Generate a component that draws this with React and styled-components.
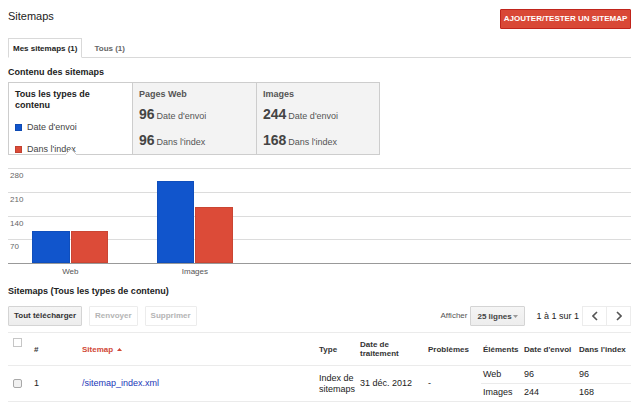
import React from "react";
import styled, { createGlobalStyle } from "styled-components";

const GlobalStyle = createGlobalStyle`
  *, *::before, *::after {
    box-sizing: border-box;
  }
  body {
    margin: 0;
    background: #fff;
    color: #222;
    font: 9px/12px "Liberation Sans", Arial, sans-serif;
  }
  button, select, input {
    font-family: inherit;
    margin: 0;
  }
`;

const Page = styled.main`
  padding: 9px 9px 0 8px;
`;

const Header = styled.header`
  display: flex;
  justify-content: space-between;
  align-items: flex-start;
`;

const Title = styled.h1`
  margin: 0;
  font-size: 11px;
  font-weight: 400;
  line-height: 14px;
`;

const Button = styled.button`
  height: 20px;
  padding: 0 5px;
  border: 1px solid #d4d4d4;
  border-radius: 1px;
  background: linear-gradient(#f5f5f5, #ededed);
  color: #333;
  font-size: 8px;
  font-weight: 700;
  line-height: 18px;
  white-space: nowrap;

  &:disabled {
    border-color: #ececec;
    background: #fff;
    color: #b4b4b4;
  }
`;

const PrimaryButton = styled(Button)`
  padding: 0 2px;
  min-width: 131px;
  border-color: #c0241b;
  background: #d94836;
  color: #fff;
`;

const Tabs = styled.nav`
  display: flex;
  margin-top: 9px;
  border-bottom: 1px solid #d9d9d9;
`;

const Tab = styled.a`
  height: 20px;
  margin-bottom: -1px;
  padding: 0 ${props => (props.$active ? 4 : 11)}px;
  border: 1px solid ${props => (props.$active ? "#d9d9d9" : "transparent")};
  border-bottom-color: ${props => (props.$active ? "#fff" : "transparent")};
  color: ${props => (props.$active ? "#222" : "#666")};
  font-size: 8px;
  font-weight: 700;
  line-height: 19px;
  text-decoration: none;
`;

const SectionTitle = styled.h2`
  margin: ${props => props.$top}px 0 0;
  font-size: 9px;
  font-weight: 700;
  line-height: 12px;
`;

const Cards = styled.div`
  display: grid;
  grid-template-columns: repeat(3, minmax(0, 124px));
  margin-top: 4px;
`;

const Card = styled.section`
  position: relative;
  height: 73px;
  margin-right: -1px;
  padding: 6px 6px 0;
  border: 1px solid #cdcdcd;
  background: ${props => (props.$active ? "#fff" : "#f3f3f3")};
  color: ${props => (props.$active ? "#222" : "#555")};

  &:last-child {
    margin-right: 0;
  }
`;

const CardTitle = styled.h3`
  margin: 0;
  font-size: 9px;
  font-weight: 700;
  line-height: 11px;
`;

const Legend = styled.div`
  display: flex;
  align-items: center;
  gap: 5px;
  margin-top: 10px;
  color: #444;
`;

const Swatch = styled.span`
  width: 7px;
  height: 7px;
  border: 1px solid rgba(0, 0, 0, 0.12);
  background: ${props => props.$color};
`;

const Stat = styled.div`
  display: flex;
  align-items: baseline;
  gap: 2px;
  margin-top: 4px;
  line-height: 20px;
`;

const Count = styled.strong`
  font-size: 14px;
  color: #444;
`;

const Notch = styled.svg`
  position: absolute;
  bottom: -1px;
  left: 50%;
  width: 12px;
  height: 7px;
  margin-left: -6px;
`;

const Plot = styled.div`
  display: grid;
  height: 96px;
  margin-top: 13px;
  border-bottom: 1px solid #999;
`;

const Scale = styled.div`
  grid-area: 1 / 1;
  display: flex;
  flex-direction: column;
`;

const Tick = styled.div`
  flex: 1;
  padding: 0 2px;
  border-top: 1px solid #dcdcdc;
  color: #666;
  font-size: 8px;
  line-height: 13px;
`;

const Columns = styled.div`
  grid-area: 1 / 1;
  display: grid;
  grid-template-columns: repeat(5, 1fr);
`;

const Bars = styled(Columns)`
  padding-top: 1px;
`;

const BarPair = styled.div`
  display: flex;
  justify-content: center;
  align-items: flex-end;
  gap: 1px;
`;

const Bar = styled.div`
  width: 30%;
  background: ${props => props.$color};
  border: 1px solid rgba(0, 0, 0, 0.08);
`;

const AxisLabel = styled.div`
  color: #555;
  font-size: 8px;
  line-height: 16px;
  text-align: center;
`;

const Toolbar = styled.div`
  display: flex;
  align-items: center;
  margin-top: 9px;
`;

const Actions = styled.div`
  display: flex;
  flex: 1;
  gap: 7px;
`;

const RowsLabel = styled.label`
  margin-right: 3px;
  color: #555;
  font-size: 8px;
`;

const RowsPicker = styled.div`
  display: flex;
  align-items: center;
  position: relative;
  margin-right: 11px;
`;

const Select = styled.select`
  width: 55px;
  height: 20px;
  padding: 0 6px;
  appearance: none;
  border: 1px solid #d4d4d4;
  border-radius: 1px;
  background: linear-gradient(#f5f5f5, #ededed);
  color: #444;
  font-size: 8px;
  font-weight: 700;
`;

const Caret = styled.svg`
  position: absolute;
  right: 7px;
  width: 5px;
  height: 3px;
  pointer-events: none;
`;

const Pager = styled.div`
  display: flex;
  margin-left: 3px;
`;

const PagerButton = styled.button`
  display: flex;
  align-items: center;
  justify-content: center;
  width: 25px;
  height: 20px;
  padding: 0;
  border: 1px solid #ececec;
  background: #fff;

  & + & {
    margin-left: -1px;
  }
`;

const Table = styled.table`
  width: 100%;
  margin-top: 6px;
  table-layout: fixed;
  border-collapse: collapse;
  border-top: 1px solid #ebebeb;
`;

const Th = styled.th`
  height: 33px;
  padding: 0 2px;
  border-bottom: 1px solid #ebebeb;
  color: ${props => (props.$sorted ? "#d14836" : "#333")};
  font-size: 8px;
  font-weight: 700;
  line-height: 9px;
  text-align: left;
  vertical-align: ${props => (props.$top ? "top" : "middle")};
`;

const Td = styled.td`
  height: 18px;
  padding: 0 2px;
  border-bottom: 1px solid #ebebeb;
  line-height: 11px;
`;

const Checkbox = styled.input`
  display: block;
  width: 9px;
  height: 9px;
  margin: ${props => (props.$head ? 5 : 0)}px 0 0 3px;
  appearance: none;
  border: 1px solid ${props => (props.$head ? "#c6c6c6" : "#a8a8a8")};
  border-radius: ${props => (props.$head ? 0 : 2)}px;
  background: ${props => (props.$head ? "#fff" : "#f1f1f1")};
`;

const SortArrow = styled.svg`
  width: 5px;
  height: 3px;
  margin-left: 4px;
  vertical-align: middle;
`;

const Link = styled.a`
  color: #1a36b8;
  text-decoration: none;
`;

const BLUE = "#1155cc";
const RED = "#dc4b38";
const MAX = 280;

const contents = [
  { label: "Web", title: "Pages Web", submitted: 96, indexed: 96 },
  { label: "Images", title: "Images", submitted: 244, indexed: 168 }
];

const columnWidths = [24, 48, null, 41, 68, 55, 41, 55, 54];

const Chevron = ({ d }) => (
  <svg width="6" height="10" viewBox="0 0 6 10" fill="none">
    <path d={d} stroke="#555" strokeWidth="1.6" />
  </svg>
);

const Summary = () => (
  <Cards>
    <Card $active>
      <CardTitle>Tous les types de contenu</CardTitle>
      <Legend>
        <Swatch $color={BLUE} />
        Date d'envoi
      </Legend>
      <Legend>
        <Swatch $color={RED} />
        Dans l'index
      </Legend>
      <Notch viewBox="0 0 12 7">
        <path d="M0.5 7L6 1L11.5 7Z" fill="#fff" />
        <path d="M0.5 6.5L6 1L11.5 6.5" fill="none" stroke="#cdcdcd" />
      </Notch>
    </Card>
    {contents.map(item => (
      <Card key={item.label}>
        <CardTitle>{item.title}</CardTitle>
        <Stat>
          <Count>{item.submitted}</Count> Date d'envoi
        </Stat>
        <Stat>
          <Count>{item.indexed}</Count> Dans l'index
        </Stat>
      </Card>
    ))}
  </Cards>
);

const Chart = () => (
  <div>
    <Plot>
      <Scale>
        {[280, 210, 140, 70].map(value => <Tick key={value}>{value}</Tick>)}
      </Scale>
      <Bars>
        {contents.map(item => (
          <BarPair key={item.label}>
            <Bar
              $color={BLUE}
              style={{ height: `${item.submitted / MAX * 100}%` }}
            />
            <Bar
              $color={RED}
              style={{ height: `${item.indexed / MAX * 100}%` }}
            />
          </BarPair>
        ))}
      </Bars>
    </Plot>
    <Columns>
      {contents.map(item => (
        <AxisLabel key={item.label}>{item.label}</AxisLabel>
      ))}
    </Columns>
  </div>
);

const SitemapTable = () => (
  <Table>
    <colgroup>
      {columnWidths.map((width, i) => <col key={i} width={width} />)}
    </colgroup>
    <thead>
      <tr>
        <Th $top>
          <Checkbox $head type="checkbox" aria-label="Tout sélectionner" />
        </Th>
        <Th>#</Th>
        <Th $sorted>
          Sitemap
          <SortArrow viewBox="0 0 5 3">
            <path d="M0 3L2.5 0L5 3Z" fill="#d14836" />
          </SortArrow>
        </Th>
        <Th>Type</Th>
        <Th>Date de traitement</Th>
        <Th>Problèmes</Th>
        <Th>Éléments</Th>
        <Th>Date d'envoi</Th>
        <Th>Dans l'index</Th>
      </tr>
    </thead>
    <tbody>
      <tr>
        <Td rowSpan={2}>
          <Checkbox type="checkbox" aria-label="/sitemap_index.xml" />
        </Td>
        <Td rowSpan={2}>1</Td>
        <Td rowSpan={2}>
          <Link href="#sitemap">/sitemap_index.xml</Link>
        </Td>
        <Td rowSpan={2}>Index de sitemaps</Td>
        <Td rowSpan={2}>31 déc. 2012</Td>
        <Td rowSpan={2}>-</Td>
        <Td>Web</Td>
        <Td>96</Td>
        <Td>96</Td>
      </tr>
      <tr>
        <Td>Images</Td>
        <Td>244</Td>
        <Td>168</Td>
      </tr>
    </tbody>
  </Table>
);

const App = () => (
  <Page>
    <GlobalStyle />
    <Header>
      <Title>Sitemaps</Title>
      <PrimaryButton type="button">AJOUTER/TESTER UN SITEMAP</PrimaryButton>
    </Header>
    <Tabs>
      <Tab href="#mine" $active>
        Mes sitemaps (1)
      </Tab>
      <Tab href="#all">Tous (1)</Tab>
    </Tabs>
    <SectionTitle $top={8}>Contenu des sitemaps</SectionTitle>
    <Summary />
    <Chart />
    <SectionTitle $top={5}>Sitemaps (Tous les types de contenu)</SectionTitle>
    <Toolbar>
      <Actions>
        <Button type="button">Tout télécharger</Button>
        <Button type="button" disabled>
          Renvoyer
        </Button>
        <Button type="button" disabled>
          Supprimer
        </Button>
      </Actions>
      <RowsPicker>
        <RowsLabel htmlFor="rows">Afficher</RowsLabel>
        <Select id="rows" defaultValue="25">
          <option value="25">25 lignes</option>
        </Select>
        <Caret viewBox="0 0 5 3">
          <path d="M0 0H5L2.5 3Z" fill="#999" />
        </Caret>
      </RowsPicker>
      <span>1 à 1 sur 1</span>
      <Pager>
        <PagerButton type="button" aria-label="Page précédente">
          <Chevron d="M5 1L1 5L5 9" />
        </PagerButton>
        <PagerButton type="button" aria-label="Page suivante">
          <Chevron d="M1 1L5 5L1 9" />
        </PagerButton>
      </Pager>
    </Toolbar>
    <SitemapTable />
  </Page>
);

export default App;
